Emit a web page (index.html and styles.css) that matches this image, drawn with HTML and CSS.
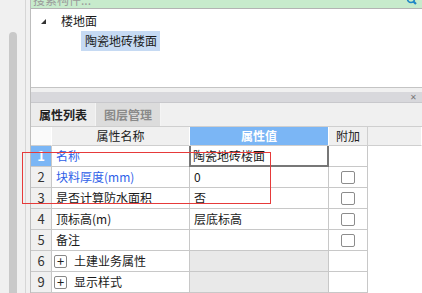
FILE: index.html
```html
<!DOCTYPE html>
<html>
<head>
<meta charset="utf-8">
<link rel="stylesheet" href="styles.css">
</head>
<body>
<div class="sidebar"><div class="thumb"></div></div>
<div class="gutter"></div>
<div class="main">
  <div class="tree-panel">
    <div class="search">
      <span class="search-text">搜索构件...</span>
      <svg class="search-icon" width="12" height="10" viewBox="0 0 12 10"><circle cx="5" cy="-1" r="3.5" fill="none" stroke="#1f86c6" stroke-width="1.6"/><path d="M7.5 1.5 L10 4" stroke="#1f86c6" stroke-width="2.2"/></svg>
    </div>
    <div class="tree">
      <div class="node">
        <svg class="tri" width="6" height="6" viewBox="0 0 6 6"><polygon points="5,0 5,5 0,5" fill="#333"/></svg>
        <span>楼地面</span>
      </div>
      <div class="node child"><span class="sel">陶瓷地砖楼面</span></div>
    </div>
  </div>
  <div class="spacer"></div>
  <div class="props-panel">
    <div class="panel-head"><span class="close">✕</span></div>
    <div class="tabs">
      <div class="tab active">属性列表</div>
      <div class="tab">图层管理</div>
    </div>
    <div class="grid">
      <div class="h num"></div>
      <div class="h name">属性名称</div>
      <div class="h val">属性值</div>
      <div class="h add">附加</div>
      <div class="h rest"></div>

      <div class="c num cur">1</div>
      <div class="c name blue">名称</div>
      <div class="c val edit">陶瓷地砖楼面</div>
      <div class="c add"></div>
      <div class="c rest"></div>

      <div class="c num">2</div>
      <div class="c name blue">块料厚度(mm)</div>
      <div class="c val">0</div>
      <div class="c add"><span class="cb"></span></div>
      <div class="c rest"></div>

      <div class="c num">3</div>
      <div class="c name">是否计算防水面积</div>
      <div class="c val">否</div>
      <div class="c add"><span class="cb"></span></div>
      <div class="c rest"></div>

      <div class="c num">4</div>
      <div class="c name">顶标高(m)</div>
      <div class="c val">层底标高</div>
      <div class="c add"><span class="cb"></span></div>
      <div class="c rest"></div>

      <div class="c num">5</div>
      <div class="c name">备注</div>
      <div class="c val"></div>
      <div class="c add"><span class="cb"></span></div>
      <div class="c rest"></div>

      <div class="c num">6</div>
      <div class="c name"><span class="plus">+</span>土建业务属性</div>
      <div class="c val grey"></div>
      <div class="c add"></div>
      <div class="c rest"></div>

      <div class="c num">9</div>
      <div class="c name"><span class="plus">+</span>显示样式</div>
      <div class="c val grey"></div>
      <div class="c add"></div>
      <div class="c rest"></div>
    </div>
  </div>
</div>
<div class="mark"></div>
</body>
</html>
```
FILE: styles.css
```css
html, body {
  margin: 0;
  padding: 0;
}
body {
  width: 422px;
  height: 293px;
  overflow: hidden;
  display: flex;
  background: #f0f0f0;
  font-family: "Noto Sans CJK SC", "Microsoft YaHei", sans-serif;
  font-size: 12px;
  color: #1a1a1a;
  position: relative;
}
.sidebar {
  width: 26px;
  border-right: 1px solid #d6d6d6;
  display: flex;
  flex-direction: column;
  padding: 32px 0 0 9px;
  box-sizing: border-box;
}
.thumb {
  width: 8px;
  flex: 1;
  background: #c9c9c9;
  border-radius: 4px 4px 0 0;
}
.gutter {
  width: 4px;
}
.main {
  flex: 1;
  display: flex;
  flex-direction: column;
  border-left: 1px solid #bdbdbd;
}
.tree-panel {
  height: 89px;
  background: #fff;
  border-bottom: 1px solid #c4c4c4;
  box-sizing: border-box;
}
.search {
  height: 8px;
  background: #c7ebcc;
  border-bottom: 1px solid #b3b3b3;
  display: flex;
  justify-content: space-between;
  overflow: hidden;
}
.search-text {
  color: #9a9a9a;
  line-height: 12px;
  margin-top: -6px;
  padding-left: 2px;
}
.search-icon {
  margin-right: 4px;
}
.tree {
  padding-top: 2px;
}
.node {
  height: 20px;
  display: flex;
  align-items: center;
  padding-left: 10px;
  line-height: 20px;
}
.tri {
  margin-right: 14px;
  margin-top: 1px;
}
.node.child {
  padding-left: 50px;
  margin-top: 0;
}
.sel {
  background: #c6daf3;
  padding: 0 3px 0 4px;
  height: 20px;
  line-height: 20px;
}
.spacer {
  height: 4px;
}
.props-panel {
  flex: 1;
  display: flex;
  flex-direction: column;
  background: #fff;
}
.panel-head {
  height: 10px;
  background: #d8d8dc;
  display: flex;
  justify-content: flex-end;
  align-items: center;
  border-bottom: 1px solid #c8c8cc;
}
.close {
  font-size: 8px;
  color: #777;
  margin-right: 5px;
  line-height: 8px;
}
.tabs {
  height: 23px;
  background: #f0f0f0;
  display: flex;
  border-bottom: 1px solid #cfcfcf;
}
.tab {
  width: 64px;
  text-align: center;
  line-height: 23px;
  background: #dcdcdc;
  color: #8a8a8a;
  border-right: 1px solid #f4f4f4;
  font-weight: bold;
}
.tab.active {
  background: #ececec;
  color: #222;
}
.grid {
  display: grid;
  grid-template-columns: 21px 138px 139px 39px 1fr;
  grid-auto-rows: 21px;
  grid-template-rows: 19px;
}
.h {
  background: #f0f0f0;
  border-bottom: 1px solid #cfcfcf;
  border-right: 1px solid #fff;
  text-align: center;
  line-height: 18px;
  color: #222;
}
.h.num {
  background: #fafafa;
}
.h.val {
  background: #7bb6f5;
  color: #fff;
  font-weight: bold;
}
.h.add {
  border-right: 1px solid #cfcfcf;
}
.c {
  border-right: 1px solid #c8c8c8;
  border-bottom: 1px solid #c8c8c8;
  line-height: 20px;
  padding-left: 4px;
  white-space: nowrap;
  display: flex;
  align-items: center;
}
.c.num {
  background: #f0f0f0;
  color: #333;
  justify-content: center;
  padding: 0;
  font-size: 13px;
}
.c.num.cur {
  background: #7bb6f5;
  color: #fff;
  font-weight: bold;
}
.blue {
  color: #2f5fe8;
}
.c.val.edit {
  border: 2px solid #777;
  border-top: none;
  padding-left: 2px;
  margin-left: -1px;
}
.c.val.grey {
  background: #e9e9e9;
}
.c.add {
  justify-content: center;
  padding: 0;
}
.c.rest {
  border: none;
}
.cb {
  width: 12px;
  height: 11px;
  border: 1px solid #8c8c8c;
  border-radius: 2px;
  background: #fff;
}
.plus {
  width: 11px;
  height: 11px;
  border: 1px solid #888;
  border-radius: 2px;
  line-height: 10px;
  text-align: center;
  font-size: 13px;
  margin: 0 7px 0 -2px;
  color: #222;
}
.mark {
  position: absolute;
  left: 22px;
  top: 152px;
  width: 247px;
  height: 50px;
  border: 1px solid #e63a3a;
}
```
